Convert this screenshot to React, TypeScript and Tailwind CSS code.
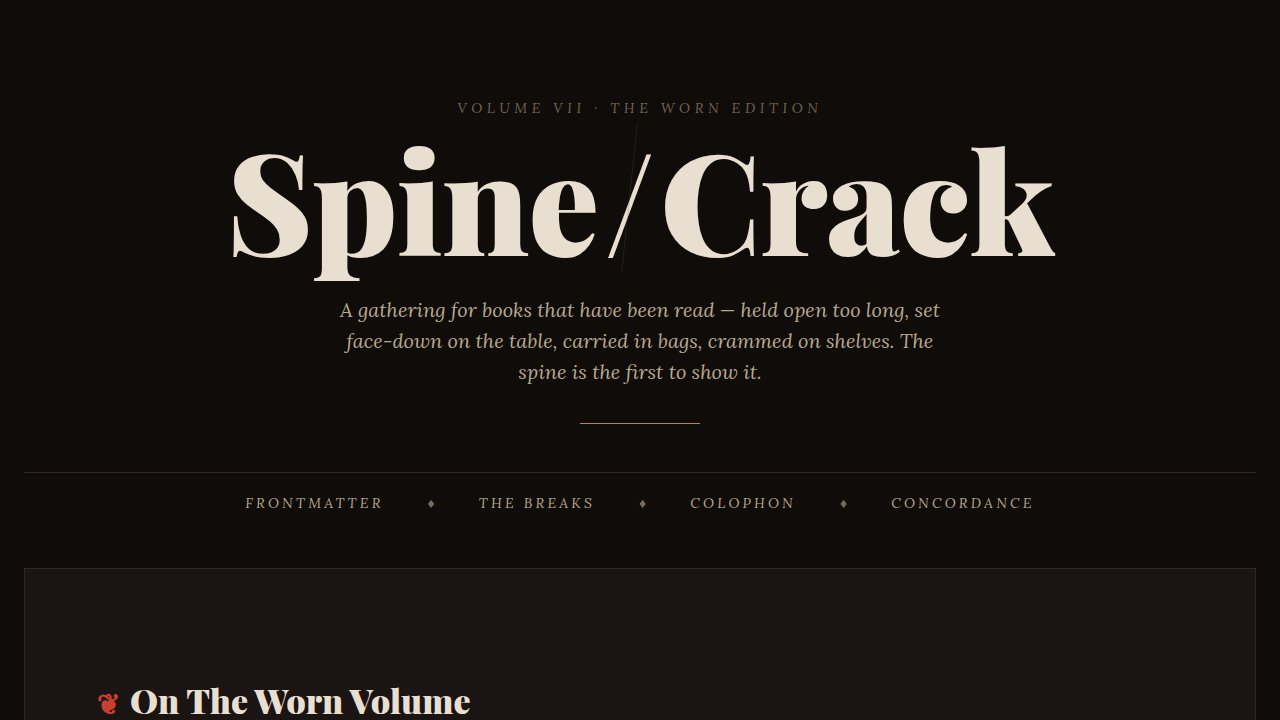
import { Fragment } from "react";

const navLinks = [
  { href: "#frontmatter", label: "Frontmatter" },
  { href: "#breaks", label: "The Breaks" },
  { href: "#colophon", label: "Colophon" },
  { href: "#concordance", label: "Concordance" },
];

function Masthead() {
  return (
    <header className="flex flex-col items-center pt-24 pb-12 text-center">
      <p className="text-[14px] leading-6 tracking-[0.33em] text-[#736553] uppercase italic">
        Volume VII · The Worn Edition
      </p>
      <h1 className="mt-3 font-['Playfair_Display','Liberation_Serif',serif] text-[141px] leading-[130px] font-black tracking-[-0.01em] text-[#e8dfd0]">
        Spine
        <span className="relative mx-1.5 inline-block">
          /
          <span
            aria-hidden="true"
            className="absolute top-[-9px] left-1/2 h-[150px] w-px rotate-6 bg-[#6b5d4d]/25"
          />
        </span>
        Crack
      </h1>
      <p className="mt-8 max-w-[600px] text-[20px] leading-[31px] text-[#b8a88f] italic">
        A gathering for books that have been read — held open too long, set
        face-down on the table, carried in bags, crammed on shelves. The spine
        is the first to show it.
      </p>
      <div className="mt-9 h-px w-30 bg-[#b8892f]" />
    </header>
  );
}

function SiteNav() {
  return (
    <nav className="flex items-center justify-center gap-11 border-t border-[#33281f] py-[18px]">
      {navLinks.map((link, index) => (
        <Fragment key={link.href}>
          {index > 0 ? (
            <span aria-hidden="true" className="text-[14px] leading-6 text-[#7a6c5a]">
              ♦
            </span>
          ) : null}
          <a
            href={link.href}
            className="text-[14px] leading-6 tracking-[0.23em] text-[#b8a88f] uppercase italic hover:text-[#e8dfd0]"
          >
            {link.label}
          </a>
        </Fragment>
      ))}
    </nav>
  );
}

export default function App() {
  return (
    <div className="min-h-screen bg-[#0f0c09] px-6 font-['Lora','Liberation_Serif',serif]">
      <Masthead />
      <SiteNav />
      <main className="mt-[35px] border border-[#33281f] bg-[#1a1512] px-18 pt-27 pb-24">
        <h2 className="flex items-baseline gap-2.5 font-['Playfair_Display','Liberation_Serif',serif] text-[34px] leading-[46px] font-black text-[#e8dfd0]">
          <span aria-hidden="true" className="text-[28px] text-[#c8402f]">
            ❦
          </span>
          On The Worn Volume
        </h2>
      </main>
    </div>
  );
}
